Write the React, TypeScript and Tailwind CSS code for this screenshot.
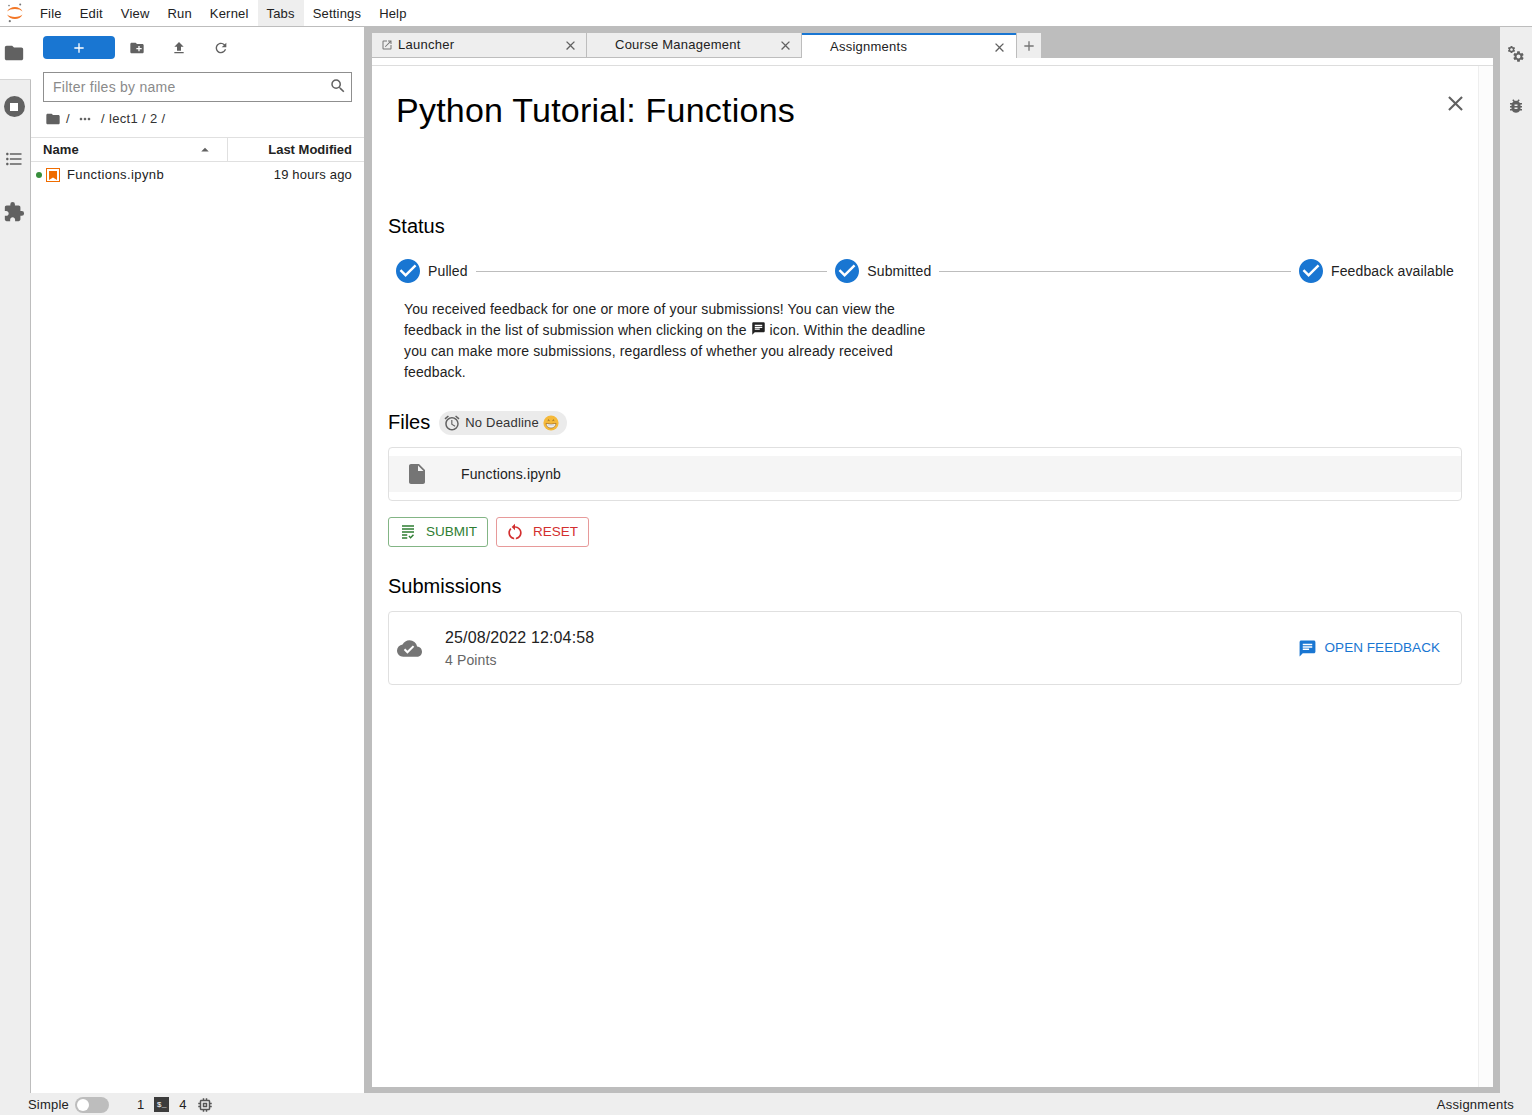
import type { ReactNode } from 'react'
import {
  MdAccessAlarm,
  MdAdd,
  MdArrowDropUp,
  MdBugReport,
  MdChat,
  MdClose,
  MdCloudDone,
  MdCreateNewFolder,
  MdExtension,
  MdFileUpload,
  MdFolder,
  MdFormatListBulleted,
  MdGrading,
  MdInsertDriveFile,
  MdMemory,
  MdMoreHoriz,
  MdOpenInNew,
  MdRefresh,
  MdRestartAlt,
  MdSearch,
  MdSettings,
  MdStop,
} from 'react-icons/md'

const menus = ['File', 'Edit', 'View', 'Run', 'Kernel', 'Tabs', 'Settings', 'Help']

function JupyterLogo() {
  return (
    <svg width="16" height="20" viewBox="0 0 16 20" className="shrink-0">
      <path d="M0 8.5C3 2.5 13 2.5 15.5 8.5C12.5 5.2 3.5 5.2 0 8.5Z" fill="#f37726" />
      <path d="M0 11.5C3 17.5 13 17.5 15.5 11.5C12.5 14.8 3.5 14.8 0 11.5Z" fill="#f37726" />
      <circle cx="13.2" cy="1.6" r="1" fill="#767677" />
      <circle cx="2" cy="2.6" r="0.8" fill="#767677" />
      <circle cx="2.8" cy="18.2" r="1.1" fill="#767677" />
    </svg>
  )
}

function SideIcon({ active, children }: { active?: boolean; children: ReactNode }) {
  return (
    <div
      className={
        active
          ? 'flex h-[53px] w-[31px] items-center justify-center border-b border-[#d5d5d5] bg-white pr-[3px]'
          : 'flex h-[53px] w-[31px] items-center justify-center border-r border-[#bdbdbd] pr-[2px]'
      }
    >
      {children}
    </div>
  )
}

function Tab({ title, active, launcher }: { title: string; active?: boolean; launcher?: boolean }) {
  return (
    <div
      className={
        active
          ? 'flex h-[27px] w-[214px] items-center border-t-2 border-[#1976d2] bg-white pb-px pl-[28px] pr-[9px]'
          : 'flex h-[25px] w-[214px] items-center border-b border-[#bdbdbd] bg-[#eeeeee] pr-[8px]'
      }
    >
      {launcher && <MdOpenInNew className="ml-[9px] mr-[5px] text-[#757575]" size={12} />}
      {!launcher && !active && <span className="w-[28px]" />}
      <span className="flex-1 text-[13px] tracking-[0.25px] text-[#222]">{title}</span>
      <MdClose className="text-[#616161]" size={15} />
    </div>
  )
}

function StepCheck() {
  return (
    <svg width="24" height="24" viewBox="2 2 20 20" className="shrink-0">
      <path
        fill="#1976d2"
        d="M12 2C6.48 2 2 6.48 2 12s4.48 10 10 10 10-4.48 10-10S17.52 2 12 2zm-2 15l-5-5 1.41-1.41L10 14.17l7.59-7.59L19 8l-9 9z"
      />
    </svg>
  )
}

function GrinEmoji() {
  return (
    <svg width="16" height="16" viewBox="0 0 16 16" className="shrink-0">
      <circle cx="8" cy="8" r="7.6" fill="#f5b93a" />
      <path d="M4.8 5.6q.8-1 1.6 0M9.6 5.6q.8-1 1.6 0" stroke="#6b4a1a" strokeWidth="0.9" fill="none" />
      <path d="M3 8.4q5 1.4 10 0q-.6 4.6-5 4.6t-5-4.6Z" fill="#fff" stroke="#8a5a1a" strokeWidth="0.6" />
      <path d="M3.6 10.4h8.8M6 9v3.6M8 9.2v3.6M10 9v3.6" stroke="#b9b9b9" strokeWidth="0.4" />
    </svg>
  )
}

function Gears() {
  return (
    <div className="relative h-[18px] w-[18px]">
      <MdSettings className="absolute left-0 top-0 text-[#616161]" size={9} />
      <MdSettings className="absolute bottom-0 right-0 text-[#616161]" size={13} />
    </div>
  )
}

export default function App() {
  return (
    <div className="flex h-[1115px] w-[1532px] flex-col overflow-hidden bg-[#eeeeee] font-['Liberation_Sans',Arial,sans-serif] text-[13px] text-[#222]">
      {/* menu bar */}
      <header className="flex h-[27px] shrink-0 items-stretch border-b border-[#bdbdbd] bg-white pl-[7px]">
        <div className="flex w-[24px] items-center">
          <JupyterLogo />
        </div>
        {menus.map((m) => (
          <div
            key={m}
            className={
              m === 'Tabs'
                ? 'flex items-center bg-[#eeeeee] px-[9px] pt-px tracking-[0.18px]'
                : 'flex items-center px-[9px] pt-px tracking-[0.18px]'
            }
          >
            {m}
          </div>
        ))}
      </header>

      <div className="flex min-h-0 flex-1">
        {/* left rail */}
        <aside className="flex w-[31px] shrink-0 flex-col">
          <SideIcon active>
            <MdFolder className="text-[#616161]" size={22} />
          </SideIcon>
          <SideIcon>
            <div className="flex h-[21px] w-[21px] items-center justify-center rounded-full bg-[#616161]">
              <MdStop className="text-white" size={16} />
            </div>
          </SideIcon>
          <SideIcon>
            <MdFormatListBulleted className="-mt-[2px] text-[#616161]" size={20} />
          </SideIcon>
          <SideIcon>
            <MdExtension className="-mt-[2px] text-[#616161]" size={22} />
          </SideIcon>
          <div className="flex-1 border-r border-[#bdbdbd]" />
        </aside>

        {/* file browser */}
        <section className="flex w-[333px] shrink-0 flex-col bg-white">
          <div className="flex items-center pl-[12px] pt-[9px]">
            <button className="flex h-[23px] w-[72px] items-center justify-center rounded-sm bg-[#1976d2] text-white">
              <MdAdd size={16} />
            </button>
            <MdCreateNewFolder className="ml-[14px] text-[#616161]" size={16} />
            <MdFileUpload className="ml-[26px] text-[#616161]" size={16} />
            <MdRefresh className="ml-[26px] text-[#616161]" size={16} />
          </div>
          <div className="ml-[12px] mt-[13px] flex h-[30px] w-[309px] items-center justify-between border border-[#8f8f8f] pl-[9px] pr-[4px]">
            <span className="text-[14px] tracking-[0.25px] text-[#8a8a8a]">Filter files by name</span>
            <MdSearch className="-mt-[2px] text-[#616161]" size={18} />
          </div>
          <div className="ml-[14px] mt-[8px] flex h-[17px] items-center gap-[3px] tracking-[0.35px] text-[#333]">
            <MdFolder className="text-[#616161]" size={16} />
            <span className="ml-[2px]">/</span>
            <MdMoreHoriz className="ml-[4px] text-[#616161]" size={16} />
            <span className="ml-[5px]">/ lect1 / 2 /</span>
          </div>
          <div className="mt-[10px] flex h-[25px] items-stretch border-y border-[#e0e0e0] font-bold">
            <div className="flex w-[197px] items-center justify-between border-r border-[#e0e0e0] pl-[12px] pr-[13px]">
              <span className="tracking-[0.1px]">Name</span>
              <MdArrowDropUp className="text-[#616161]" size={18} />
            </div>
            <div className="flex flex-1 items-center justify-end pr-[12px]">Last Modified</div>
          </div>
          <div className="flex h-[26px] items-center pl-[5px] pr-[12px]">
            <span className="h-[6px] w-[6px] rounded-full bg-[#388e3c]" />
            <span className="ml-[4px] flex h-[14px] w-[14px] items-center justify-center border border-[#ef6c00]">
              <svg width="8" height="9" viewBox="0 0 8 9">
                <path d="M0 0h8v9L4 6.4 0 9Z" fill="#ef6c00" />
              </svg>
            </span>
            <span className="ml-[7px] flex-1 tracking-[0.4px]">Functions.ipynb</span>
            <span className="tracking-[0.2px]">19 hours ago</span>
          </div>
        </section>

        {/* dock */}
        <main className="flex min-w-0 flex-1 flex-col bg-[#bdbdbd] pb-[6px] pl-[8px] pr-[7px]">
          <div className="flex h-[31px] shrink-0 items-start gap-px pt-[6px]">
            <Tab title="Launcher" launcher />
            <Tab title="Course Management" />
            <Tab title="Assignments" active />
            <div className="flex h-[25px] w-[24px] items-center justify-center bg-[#eeeeee] text-[#757575]">
              <MdAdd size={16} />
            </div>
          </div>

          <div className="flex min-h-0 flex-1 flex-col bg-white">
            <div className="h-[8px] shrink-0 border-b border-[#dddddd]" />
            <div className="flex min-h-0 flex-1">
              <div className="w-[1107px] border-r border-[#eeeeee] px-[16px] tracking-[0.13px]">
                <div className="flex items-start justify-between pl-[8px] pt-[24px]">
                  <h1 className="text-[34px] leading-[40px] tracking-[0.23px] text-black">
                    Python Tutorial: Functions
                  </h1>
                  <MdClose className="-mr-[6px] mt-px text-[#616161]" size={25} />
                </div>

                <h2 className="mt-[84px] text-[20px] leading-[24px] tracking-normal text-black">Status</h2>
                <div className="mt-[21px] flex h-[24px] items-center px-[8px] text-[14px]">
                  <StepCheck />
                  <span className="ml-[8px]">Pulled</span>
                  <div className="mx-[8px] h-px flex-1 bg-[#bdbdbd]" />
                  <StepCheck />
                  <span className="ml-[8px]">Submitted</span>
                  <div className="mx-[8px] h-px flex-1 bg-[#bdbdbd]" />
                  <StepCheck />
                  <span className="ml-[8px]">Feedback available</span>
                </div>
                <p className="ml-[16px] mt-[16px] w-[535px] text-[14px] leading-[21px]">
                  You received feedback for one or more of your submissions! You can view the feedback in the list of
                  submission when clicking on the{' '}
                  <MdChat className="relative top-[-3px] inline text-[#222]" size={15} /> icon. Within the deadline you
                  can make more submissions, regardless of whether you already received feedback.
                </p>

                <div className="mt-[27px] flex h-[26px] items-center">
                  <h2 className="-mt-[2px] text-[20px] leading-[24px] tracking-normal text-black">Files</h2>
                  <div className="ml-[9px] flex h-[24px] items-center rounded-full bg-[#ebebeb] pl-[4px] pr-[8px] text-[13px] tracking-[0.2px]">
                    <MdAccessAlarm className="text-[#616161]" size={18} />
                    <span className="mx-[4px] text-[#333]">No Deadline</span>
                    <GrinEmoji />
                  </div>
                </div>
                <div className="mt-[11px] rounded border border-[#e0e0e0] py-[8px]">
                  <div className="flex h-[36px] items-center bg-[#f5f5f5] pl-[16px] text-[14px]">
                    <MdInsertDriveFile className="text-[#757575]" size={24} />
                    <span className="ml-[32px]">Functions.ipynb</span>
                  </div>
                </div>

                <div className="mt-[16px] flex gap-[8px] tracking-normal">
                  <button className="flex h-[30px] items-center rounded-[3px] border border-[#83b585] pl-[10px] pr-[10px] text-[13.5px] text-[#2e7d32]">
                    <MdGrading size={18} />
                    <span className="ml-[9px]">SUBMIT</span>
                  </button>
                  <button className="flex h-[30px] items-center rounded-[3px] border border-[#e79a9a] pl-[8px] pr-[10px] text-[13.5px] text-[#d32f2f]">
                    <MdRestartAlt size={20} />
                    <span className="ml-[8px]">RESET</span>
                  </button>
                </div>

                <h2 className="mt-[27px] text-[20px] leading-[24px] tracking-normal text-black">Submissions</h2>
                <div className="mt-[13px] flex h-[74px] items-center rounded border border-[#e0e0e0] pl-[8px] pr-[21px]">
                  <MdCloudDone className="text-[#757575]" size={25} />
                  <div className="ml-[23px] flex-1">
                    <div className="text-[16px] leading-[24px]">25/08/2022 12:04:58</div>
                    <div className="text-[14px] leading-[20px] text-[#666]">4 Points</div>
                  </div>
                  <div className="flex items-center text-[13.5px] tracking-[0.05px] text-[#1976d2]">
                    <MdChat size={19} />
                    <span className="ml-[8px]">OPEN FEEDBACK</span>
                  </div>
                </div>
              </div>
              <div className="flex-1 bg-[#fcfcfc]" />
            </div>
          </div>
        </main>

        {/* right rail */}
        <aside className="flex w-[32px] shrink-0 flex-col items-center">
          <div className="flex h-[53px] items-center">
            <Gears />
          </div>
          <div className="flex h-[53px] items-center">
            <MdBugReport className="-mt-[2px] text-[#616161]" size={18} />
          </div>
        </aside>
      </div>

      {/* status bar */}
      <footer className="flex h-[22px] shrink-0 items-center pl-[28px] pr-[18px] pt-px text-[13px]">
        <span className="tracking-[0.2px]">Simple</span>
        <div className="ml-[6px] flex h-[16px] w-[34px] items-center rounded-full bg-[#bdbdbd] pl-[2px]">
          <span className="h-[12px] w-[12px] rounded-full bg-white" />
        </div>
        <span className="ml-[28px]">1</span>
        <span className="ml-[10px] flex h-[15px] w-[15px] items-center justify-center bg-[#3c3c3c] font-['Liberation_Mono',monospace] text-[8px] text-white">
          $_
        </span>
        <span className="ml-[10px]">4</span>
        <MdMemory className="ml-[10px] text-[#555]" size={18} />
        <span className="ml-auto tracking-[0.25px]">Assignments</span>
      </footer>
    </div>
  )
}
